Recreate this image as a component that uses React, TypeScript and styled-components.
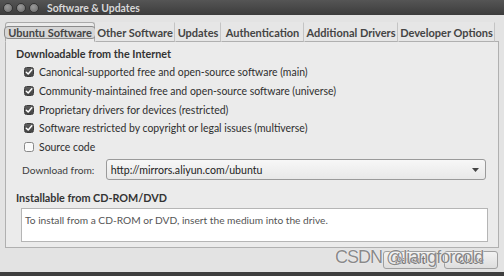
import React from "react";
import styled, { createGlobalStyle } from "styled-components";

const Global = createGlobalStyle`
  html, body { margin: 0; padding: 0; background: #3a3a3a; }
  body { font-family: Lato, "Open Sans", sans-serif; }
`;

const Window = styled.div`
  position: relative;
  width: 504px;
  height: 276px;
  display: flex;
  flex-direction: column;
  background: #e3e3e3;
  box-sizing: border-box;
  border-bottom: 4px solid #3f3f3f;
  overflow: hidden;
  color: #3a3a3a;
  font-size: 10.5px;
`;

const TitleBar = styled.div`
  height: 15px;
  flex: none;
  display: flex;
  align-items: center;
  background: linear-gradient(#555, #3c3c3c);
  padding-left: 3px;
`;

const WinButtons = styled.div`
  display: flex;
  gap: 3px;
  width: 44px;
`;

const WinButton = styled.span`
  width: 8px;
  height: 8px;
  border-radius: 50%;
  background: radial-gradient(circle at 40% 35%, #9a9a9a, #6a6a6a);
  border: 1px solid #333;
`;

const Title = styled.span`
  color: #d8d8d8;
  font-weight: 700;
  font-size: 10.4px;
`;

const Body = styled.div`
  flex: 1;
  display: flex;
  flex-direction: column;
  padding: 7px 5px 0 5px;
`;

const TabRow = styled.div`
  display: flex;
  height: 20px;
  align-items: stretch;
  margin-bottom: -1px;
  position: relative;
  z-index: 1;
`;

const Tab = styled.div<{ $active?: boolean; $w: number }>`
  width: ${(p) => p.$w}px;
  flex: none;
  box-sizing: border-box;
  display: flex;
  align-items: center;
  justify-content: center;
  font-size: 11px;
  font-weight: 700;
  color: #444;
  border: 1px solid ${(p) => (p.$active ? "#aaa" : "transparent")};
  border-bottom: 1px solid ${(p) => (p.$active ? "#ebebeb" : "#b0b0b0")};
  border-right: 1px solid ${(p) => (p.$active ? "#aaa" : "#c4c4c4")};
  border-radius: ${(p) => (p.$active ? "3px 3px 0 0" : "0")};
  background: ${(p) => (p.$active ? "#ebebeb" : "#e6e6e6")};
  white-space: nowrap;
`;

const Focus = styled.span`
  border: 1px solid #8a8a8a;
  border-radius: 4px;
  background: #d6d6d6;
  padding: 0 3px;
  line-height: 11px;
`;

const Panel = styled.div`
  height: 207px;
  flex: none;
  box-sizing: border-box;
  border: 1px solid #b0b0b0;
  background: #ebebeb;
  display: flex;
  flex-direction: column;
  padding: 5px 12px 0 10px;
`;

const Heading = styled.div`
  font-weight: 700;
  font-size: 10.8px;
  color: #333;
  height: 14px;
  line-height: 14px;
`;

const CheckList = styled.div`
  display: flex;
  flex-direction: column;
  padding: 2px 0 0 8px;
`;

const CheckRow = styled.div`
  display: flex;
  align-items: center;
  gap: 5px;
  height: 18.7px;
`;

const Box = styled.span<{ $on: boolean }>`
  width: 10px;
  height: 10px;
  box-sizing: border-box;
  border-radius: 2.5px;
  border: 1px solid ${(p) => (p.$on ? "#3c3c3c" : "#888")};
  background: ${(p) => (p.$on ? "linear-gradient(#5c5c5c, #444)" : "#fafafa")};
  display: flex;
  align-items: center;
  justify-content: center;
`;

const Label = styled.span`
  font-size: 10.45px;
  color: #2e2e2e;
  white-space: nowrap;
`;

const DownloadRow = styled.div`
  display: flex;
  align-items: center;
  margin-top: 3px;
  padding-left: 6px;
  height: 21px;
`;

const DownloadLabel = styled.span`
  width: 84px;
  font-size: 10.2px;
  color: #3c3c3c;
`;

const Combo = styled.div`
  width: 382px;
  height: 21px;
  box-sizing: border-box;
  border: 1px solid #9a9a9a;
  border-radius: 3px;
  background: linear-gradient(#f7f7f7, #e8e8e8);
  display: flex;
  align-items: center;
  justify-content: space-between;
  padding: 0 6px 0 4px;
  font-size: 10.6px;
  color: #222;
`;

const Heading2 = styled(Heading)`
  margin-top: 11px;
`;

const InfoBox = styled.div`
  margin: 3px 0 0 5px;
  width: 467px;
  height: 34px;
  box-sizing: border-box;
  border: 1px solid #b5b5b5;
  background: #fff;
  padding: 5px 3px;
  font-size: 10.2px;
  color: #555;
`;

const Footer = styled.div`
  height: 24px;
  flex: none;
  display: flex;
  justify-content: flex-end;
  align-items: center;
  padding-right: 1px;
  gap: 7px;
`;

const Button = styled.div<{ $w: number }>`
  width: ${(p) => p.$w}px;
  height: 18px;
  box-sizing: border-box;
  border: 1px solid #a0a0a0;
  border-radius: 3px;
  background: linear-gradient(#f2f2f2, #dedede);
  display: flex;
  align-items: center;
  justify-content: center;
  font-size: 10.5px;
  font-weight: 700;
  color: #777;
`;

const Watermark = styled.div`
  position: absolute;
  left: 335px;
  top: 247px;
  font-family: "Liberation Sans", Arial, sans-serif;
  font-size: 18px;
  letter-spacing: -1px;
  color: #8a8a8a;
  text-shadow: 0 0 1px #fff, 0 0 1px #fff;
  white-space: nowrap;
`;

const Check = () => (
  <svg width="8" height="8" viewBox="0 0 8 8">
    <path d="M1.3 4.2 L3.2 6 L6.8 1.8" stroke="#fff" strokeWidth="1.5" fill="none" strokeLinecap="round" strokeLinejoin="round" />
  </svg>
);

const Arrow = () => (
  <svg width="7" height="4" viewBox="0 0 7 4">
    <path d="M0 0 L7 0 L3.5 4 Z" fill="#444" />
  </svg>
);

const tabs: { label: string; w: number }[] = [
  { label: "Ubuntu Software", w: 90 },
  { label: "Other Software", w: 80 },
  { label: "Updates", w: 46 },
  { label: "Authentication", w: 83 },
  { label: "Additional Drivers", w: 94 },
  { label: "Developer Options", w: 97 },
];

const sources: { label: string; on: boolean }[] = [
  { label: "Canonical-supported free and open-source software (main)", on: true },
  { label: "Community-maintained free and open-source software (universe)", on: true },
  { label: "Proprietary drivers for devices (restricted)", on: true },
  { label: "Software restricted by copyright or legal issues (multiverse)", on: true },
  { label: "Source code", on: false },
];

export default function App() {
  return (
    <>
      <Global />
      <Window>
        <TitleBar>
          <WinButtons>
            <WinButton />
            <WinButton />
            <WinButton />
          </WinButtons>
          <Title>Software &amp; Updates</Title>
        </TitleBar>
        <Body>
          <TabRow>
            {tabs.map((t, i) => (
              <Tab key={t.label} $active={i === 0} $w={t.w}>
                {i === 0 ? <Focus>{t.label}</Focus> : t.label}
              </Tab>
            ))}
          </TabRow>
          <Panel>
            <Heading>Downloadable from the Internet</Heading>
            <CheckList>
              {sources.map((s) => (
                <CheckRow key={s.label}>
                  <Box $on={s.on}>{s.on && <Check />}</Box>
                  <Label>{s.label}</Label>
                </CheckRow>
              ))}
            </CheckList>
            <DownloadRow>
              <DownloadLabel>Download from:</DownloadLabel>
              <Combo>
                <span>http://mirrors.aliyun.com/ubuntu</span>
                <Arrow />
              </Combo>
            </DownloadRow>
            <Heading2>Installable from CD-ROM/DVD</Heading2>
            <InfoBox>To install from a CD-ROM or DVD, insert the medium into the drive.</InfoBox>
          </Panel>
          <Footer>
            <Button $w={54}>Revert</Button>
            <Button $w={54}>Close</Button>
          </Footer>
        </Body>
        <Watermark>CSDN @liangforcold</Watermark>
      </Window>
    </>
  );
}
